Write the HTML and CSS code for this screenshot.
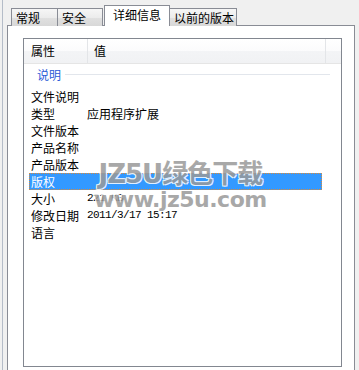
FILE: index.html
```html
<!DOCTYPE html>
<html lang="zh-CN">
<head>
    <meta charset="UTF-8">
    <title>属性 - 详细信息</title>
    <link rel="stylesheet" href="styles.css">
</head>
<body>
    <div class="dialog">
        <div class="tabs">
            <div class="tab">常规</div>
            <div class="tab second">安全</div>
            <div class="tab active">详细信息</div>
            <div class="tab wide">以前的版本</div>
        </div>
        <div class="page">
            <div class="list">
                <div class="list-head">
                    <div class="col-name">属性</div>
                    <div class="col-value">值</div>
                    <div class="col-rest"></div>
                </div>
                <div class="group">
                    <span class="group-title">说明</span>
                    <span class="group-line"></span>
                </div>
                <div class="row"><span class="name">文件说明</span><span class="value"></span></div>
                <div class="row"><span class="name">类型</span><span class="value">应用程序扩展</span></div>
                <div class="row"><span class="name">文件版本</span><span class="value"></span></div>
                <div class="row"><span class="name">产品名称</span><span class="value"></span></div>
                <div class="row"><span class="name">产品版本</span><span class="value"></span></div>
                <div class="row selected"><span class="name">版权</span><span class="value"></span></div>
                <div class="row"><span class="name">大小</span><span class="value mono">221 KB</span></div>
                <div class="row"><span class="name">修改日期</span><span class="value mono">2011/3/17 15:17</span></div>
                <div class="row"><span class="name">语言</span><span class="value"></span></div>
            </div>
        </div>
    </div>

    <div class="watermark">
        <div class="wm-big">JZ5U绿色下载</div>
        <div class="wm-small">www.jz5u.com</div>
    </div>
</body>
</html>
```

FILE: styles.css
```css
body {
    margin: 0;
    padding: 0;
    width: 359px;
    height: 370px;
    overflow: hidden;
    background-color: #f0f0f0;
    font-family: "Noto Sans CJK SC", "Liberation Sans", sans-serif;
    font-size: 12px;
    color: #000;
    position: relative;
}

.dialog {
    margin-left: 2px;
    border-left: 1px solid #b4bcc8;
    padding-left: 4px;
    height: 370px;
}

.tabs {
    display: flex;
    align-items: flex-end;
    height: 26px;
    padding-left: 4px;
    position: relative;
    z-index: 2;
    margin-bottom: -1px;
}

.tab {
    box-sizing: border-box;
    width: 47px;
    height: 18px;
    padding: 0 0 0 4px;
    line-height: 17px;
    border: 1px solid #898c95;
    border-bottom: none;
    background: linear-gradient(#f6f6f6, #ececec 50%, #e0e0e0 51%, #d8d8d8);
    white-space: nowrap;
}

.tab.second {
    width: 46px;
    margin-left: -1px;
}

.tab.active {
    width: 66px;
    height: 21px;
    margin-left: 1px;
    padding-left: 8px;
    line-height: 18px;
    background: #fff;
    position: relative;
    z-index: 3;
}

.tab.wide {
    width: 69px;
    margin-left: -2px;
    padding-left: 5px;
}

.page {
    border: 1px solid #898c95;
    background: #fff;
    margin-right: 4px;
    height: 360px;
    padding: 12px 12px 0 15px;
    box-sizing: border-box;
}

.list {
    border: 1px solid #828790;
    height: 329px;
    box-sizing: border-box;
    background: #fff;
}

.list-head {
    display: flex;
    height: 24px;
    border-bottom: 1px solid #e5e5e5;
    background: linear-gradient(#ffffff, #fbfbfc 50%, #f3f4f6 51%, #f1f2f4);
    line-height: 24px;
}

.col-name {
    width: 56px;
    padding-left: 7px;
    border-right: 1px solid #e3e5e8;
}

.col-value {
    width: 231px;
    padding-left: 6px;
    border-right: 1px solid #e3e5e8;
}

.col-rest {
    flex: 1;
}

.group {
    display: flex;
    align-items: center;
    height: 24px;
    padding: 0 11px 4px 13px;
    box-sizing: border-box;
}

.group-title {
    color: #2a5bd7;
    line-height: 17px;
}

.group-line {
    flex: 1;
    height: 1px;
    margin-left: 4px;
    background: #e2e6ec;
}

.row {
    display: flex;
    height: 17px;
    line-height: 17px;
    margin-left: 5px;
    width: 293px;
    padding-left: 2px;
    box-sizing: border-box;
    white-space: nowrap;
}

.row .name {
    width: 56px;
}

.row.selected {
    background: #3399ff;
    color: #fff;
    outline: 1px dotted #d98a3a;
    outline-offset: -1px;
}

.mono {
    font-family: "Liberation Mono", monospace;
    font-size: 11px;
    letter-spacing: -0.6px;
}

.watermark {
    position: absolute;
    left: 94px;
    top: 160px;
    font-family: "DejaVu Sans", "Noto Sans CJK SC", sans-serif;
    font-weight: bold;
    color: #9a9a9a;
    text-align: center;
    opacity: 0.85;
    text-shadow: 0 0 1px #fff, 1px 1px 0 #fff, -1px -1px 0 #fff, 1px -1px 0 #fff, -1px 1px 0 #fff;
}

.wm-big {
    font-size: 26px;
    line-height: 28px;
    letter-spacing: -1px;
}

.wm-small {
    font-size: 22px;
    line-height: 24px;
    letter-spacing: -0.5px;
}
```
